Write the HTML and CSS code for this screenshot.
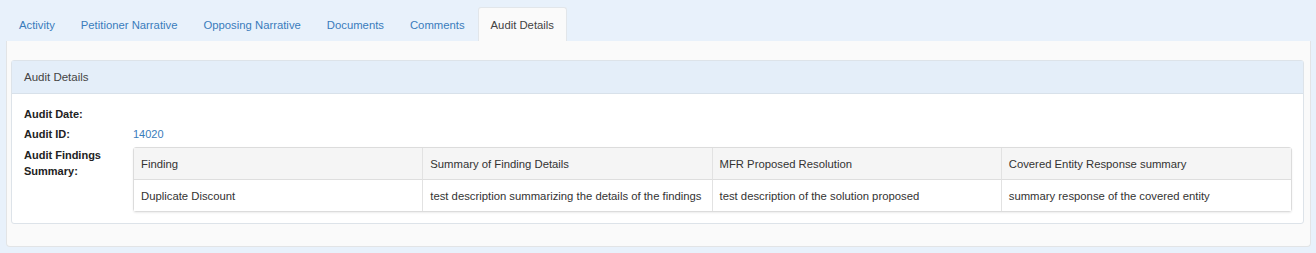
FILE: index.html
```html
<!DOCTYPE html>
<html lang="en">

<head>
    <meta charset="UTF-8" />
    <meta name="viewport" content="width=device-width, initial-scale=1" />
    <title>Audit Details</title>
    <link rel="stylesheet" href="styles.css">
</head>

<body>
    <div class="page">

        <ul class="tabs">
            <li><a href="#">Activity</a></li>
            <li><a href="#">Petitioner Narrative</a></li>
            <li><a href="#">Opposing Narrative</a></li>
            <li><a href="#">Documents</a></li>
            <li><a href="#">Comments</a></li>
            <li class="active"><a href="#">Audit Details</a></li>
        </ul>

        <div class="tab-content">
            <div class="panel">
                <div class="panel-heading">Audit Details</div>
                <div class="panel-body">
                    <div class="details">
                        <div class="label">Audit Date:</div>
                        <div class="value"></div>

                        <div class="label">Audit ID:</div>
                        <div class="value"><a href="#">14020</a></div>

                        <div class="label label-multi">Audit Findings Summary:</div>
                        <div class="value value-table">
                            <table class="findings">
                                <thead>
                                    <tr>
                                        <th>Finding</th>
                                        <th>Summary of Finding Details</th>
                                        <th>MFR Proposed Resolution</th>
                                        <th>Covered Entity Response summary</th>
                                    </tr>
                                </thead>
                                <tbody>
                                    <tr>
                                        <td>Duplicate Discount</td>
                                        <td>test description summarizing the details of the findings</td>
                                        <td>test description of the solution proposed</td>
                                        <td>summary response of the covered entity</td>
                                    </tr>
                                </tbody>
                            </table>
                        </div>
                    </div>
                </div>
            </div>
        </div>

    </div>
</body>

</html>
```

FILE: styles.css
```css
* {
    box-sizing: border-box;
    margin: 0;
    padding: 0;
}

body {
    font-family: "Liberation Sans", Arial, sans-serif;
    font-size: 11px;
    color: #333;
    background-color: #e8f1fb;
}

a {
    color: #3a7cbb;
    text-decoration: none;
}

.page {
    padding: 7px 5px 7px 6px;
}

/* Tabs */
.tabs {
    list-style: none;
    display: flex;
    height: 34px;
}

.tabs li a {
    display: block;
    height: 34px;
    line-height: 34px;
    padding: 0 12px;
    font-size: 11.3px;
    border: 1px solid transparent;
    border-bottom: none;
    border-radius: 3px 3px 0 0;
}

.tabs li.active a {
    background: #fafafa;
    color: #444;
    border-color: #e2e6ea;
}

/* Tab content */
.tab-content {
    background: #fafafa;
    border: 1px solid #e2e4e6;
    border-top: none;
    border-radius: 0 0 4px 4px;
    padding: 19px 6px 22px 4px;
}

.panel {
    background: #fff;
    border: 1px solid #dde3e9;
    border-radius: 3px;
}

.panel-heading {
    background: #e4eef9;
    border-bottom: 1px solid #d8e1ea;
    height: 33px;
    line-height: 33px;
    padding: 0 12px;
    font-size: 11.5px;
    color: #444;
}

.panel-body {
    padding: 10px 11px 11px 12px;
}

.details {
    display: grid;
    grid-template-columns: 109px 1fr;
}

.label {
    font-weight: bold;
    color: #222;
    line-height: 20px;
}

.value {
    line-height: 20px;
}

.label-multi,
.value-table {
    margin-top: 3px;
}

.label-multi {
    line-height: 16px;
}

/* Findings table */
.findings {
    width: 100%;
    border-collapse: separate;
    border-spacing: 0;
    border: 1px solid #dcdcdc;
    border-radius: 3px;
    box-shadow: 0 1px 2px rgba(0, 0, 0, 0.08);
    table-layout: fixed;
    font-size: 11.3px;
    line-height: 16px;
}

.findings th,
.findings td {
    text-align: left;
    font-weight: normal;
    padding: 0 7px;
    border-right: 1px solid #e2e2e2;
    white-space: nowrap;
}

.findings th:last-child,
.findings td:last-child {
    border-right: none;
}

.findings th {
    background: #f5f5f5;
    height: 32px;
    border-bottom: 1px solid #dedede;
}

.findings td {
    height: 31px;
    background: #fff;
}
```
